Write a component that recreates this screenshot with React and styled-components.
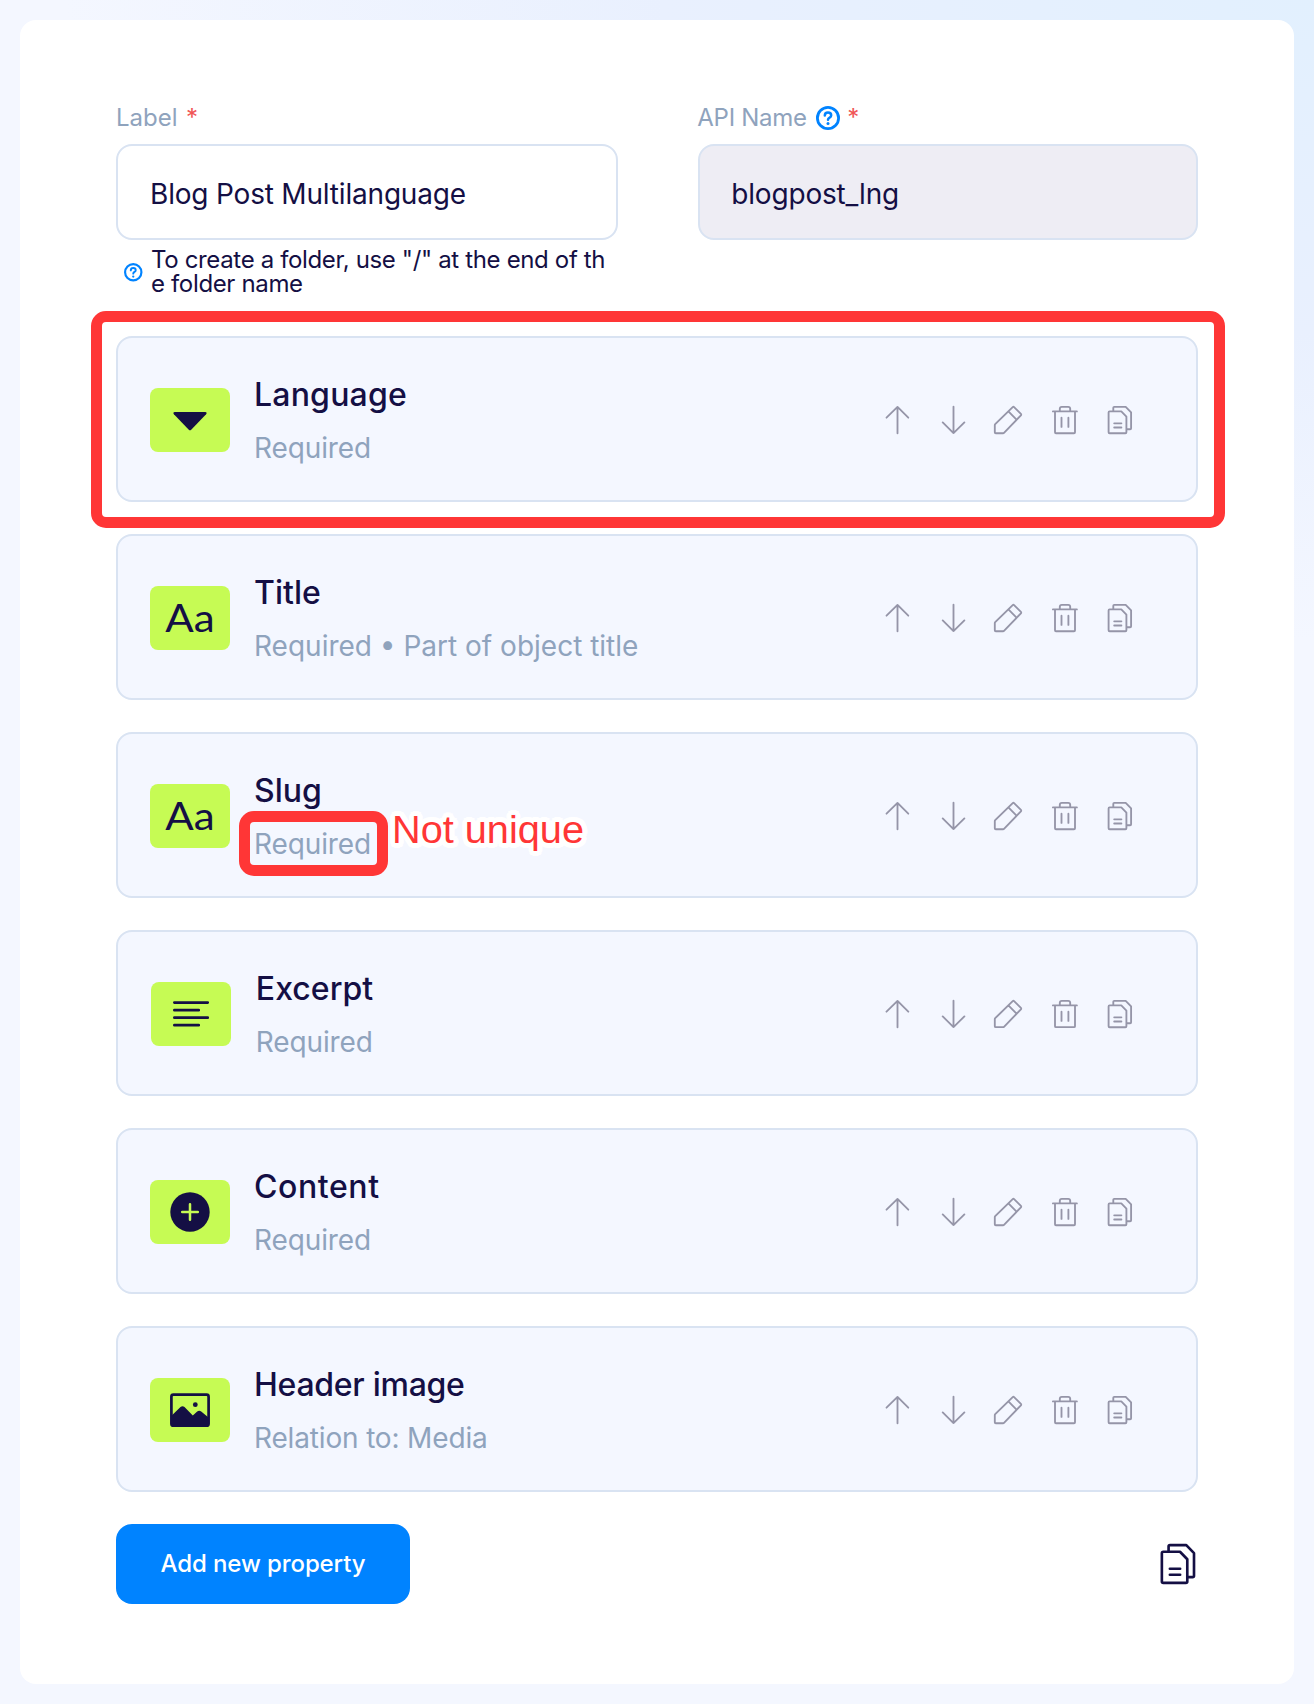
import React from 'react';
import styled, { createGlobalStyle } from 'styled-components';

const navy = '#140f44';
const red = '#ff3636';

const GlobalStyle = createGlobalStyle`
  * { box-sizing: border-box; }
  body {
    margin: 0;
    font-family: Inter, "Liberation Sans", sans-serif;
    color: ${navy};
    -webkit-font-smoothing: antialiased;
  }
`;

const Page = styled.div`
  min-height: 1704px;
  padding: 20px;
  background:
    radial-gradient(ellipse 1250px 640px at 100% 0, #e2f0fe 0%, #e9f0fe 52%, #f4f7ff 100%),
    #f4f7ff;
`;

const Card = styled.main`
  height: 1664px;
  padding: 82px 96px 0;
  border-radius: 16px;
  background: #fff;
`;

const Fields = styled.div`
  display: grid;
  grid-template-columns: 502px 500px;
  column-gap: 80px;
  height: 234px;
  align-items: start;
`;

const Field = styled.div`
  display: flex;
  flex-direction: column;
`;

const Label = styled.label`
  display: flex;
  align-items: center;
  height: 32px;
  margin: 0 0 10px ${(p) => p.$shift || 0}px;
  font-size: 24px;
  line-height: 32px;
  letter-spacing: ${(p) => p.$spacing || 0}px;
  color: #8fa3bd;
  svg { margin-left: 9.5px; }
`;

const Star = styled.span`
  margin-left: ${(p) => p.$gap}px;
  color: #f05656;
`;

const Input = styled.div`
  display: flex;
  align-items: center;
  height: 96px;
  padding: 3px 32px 0 ${(p) => (p.$disabled ? 31.3 : 32)}px;
  border: 2px solid #d9e3f2;
  border-radius: 16px;
  background: ${(p) => (p.$disabled ? '#eeedf4' : '#fff')};
  font-size: 28px;
  line-height: 36px;
  letter-spacing: -0.19px;
`;

const Hint = styled.div`
  display: flex;
  align-items: center;
  gap: 8.5px;
  padding: 8px 0 0 8px;
  font-size: 24px;
  line-height: 24px;
  letter-spacing: -0.35px;
`;

const HintText = styled.span`
  width: 460px;
  word-break: break-all;
`;

const List = styled.div`
  display: flex;
  flex-direction: column;
  gap: 32px;
`;

const Row = styled.section`
  position: relative;
  display: flex;
  align-items: center;
  height: 166px;
  padding: 2px 60px 0 32px;
  border: 2px solid #d9e3f2;
  border-radius: 16px;
  background: #f4f7ff;
`;

const Tile = styled.div`
  display: flex;
  align-items: center;
  justify-content: center;
  width: 80px;
  height: 64px;
  margin-left: ${(p) => p.$shift || 0}px;
  border-radius: 8px;
  background: #c6fb54;
`;

const Letters = styled.span`
  font-family: Lato, sans-serif;
  font-size: 39px;
  line-height: 62px;
  height: 64px;
  transform: scaleX(1.08);
`;

const Texts = styled.div`
  flex: 1;
  margin-left: ${(p) => 24 + (p.$shift ? 1.2 : 0)}px;
  padding-bottom: 1px;
`;

const Name = styled.div`
  font-size: 32px;
  font-weight: 500;
  line-height: 40px;
  letter-spacing: ${(p) => p.$spacing}px;
`;

const Meta = styled.div`
  margin-top: 16px;
  font-size: 28px;
  line-height: 35px;
  margin-bottom: -1px;
  letter-spacing: ${(p) => p.$spacing}px;
  color: #8fa3bd;
`;

const Actions = styled.div`
  display: flex;
  gap: 28px;
  color: #9595a8;
`;

const Footer = styled.footer`
  display: flex;
  align-items: center;
  justify-content: space-between;
  margin-top: 32px;
  padding-right: 3px;
`;

const AddButton = styled.button`
  width: 294px;
  height: 80px;
  border: 0;
  border-radius: 16px;
  background: #0083ff;
  color: #fff;
  font: 500 24px/32px Inter, sans-serif;
  letter-spacing: -0.1px;
`;

const Highlight = styled.div`
  position: absolute;
  left: ${(p) => p.$x}px;
  top: ${(p) => p.$y}px;
  width: ${(p) => p.$w}px;
  height: ${(p) => p.$h}px;
  border: 11px solid ${red};
  border-radius: 15px;
  pointer-events: none;
`;

const halo = Array.from({ length: 24 }, (_, i) => {
  const a = (i * Math.PI) / 12;
  return `${(5 * Math.cos(a)).toFixed(2)}px ${(5 * Math.sin(a)).toFixed(2)}px 0 #fff`;
}).join(', ');

const Note = styled.div`
  position: absolute;
  left: 274px;
  top: 72px;
  font-family: "Liberation Sans", Arial, sans-serif;
  font-size: 39.7px;
  line-height: 46px;
  white-space: nowrap;
  color: ${red};
  text-shadow: ${halo};
`;

const Stroke = styled.svg`
  display: block;
  flex: none;
  overflow: visible;
  fill: none;
  stroke: currentColor;
  stroke-width: 1.85;
  stroke-linecap: round;
  stroke-linejoin: round;
`;

const Glyph = styled.svg`
  display: block;
  fill: ${navy};
`;

const UpIcon = () => (
  <Stroke width="28" height="28" viewBox="0 0 28 28">
    <path d="M13.5 1v26.3M2.5 11.7 13.5.9l10.8 10.8" />
  </Stroke>
);
const DownIcon = () => (
  <Stroke width="28" height="28" viewBox="0 0 28 28">
    <path d="M13.5.7V27M2.7 16.4 13.5 27.1l10.9-10.7" />
  </Stroke>
);
const PencilIcon = () => (
  <Stroke width="28" height="28" viewBox="0 0 28 28">
    <path d="M-1.2 26.2v-7.1q0-.5.4-.9L16.7 1.1q.7-.6 1.4 0l6.8 6.8q.6.7 0 1.4L8 26.8q-.4.4-.9.4H-.2q-1 0-1-1ZM12.4 5.4l7.9 8" />
  </Stroke>
);
const TrashIcon = () => (
  <Stroke width="28" height="28" viewBox="0 0 28 28">
    <path d="M.9 5.4h24M3 5.4v20.8q0 1 1 1h18q1 0 1-1V5.4M7.8 5.2V2.8q0-2 2-2h6.4q2 0 2 2v2.4M9.5 11.7v9.2M16.4 11.7v9.2" />
  </Stroke>
);
const copyPath =
  'M1.6 5.4h11.7l5.1 5.3v15.5q0 1-1 1H1.6q-1 0-1-1V6.4q0-1 1-1ZM5.3 5.2V1.8q0-1 1-1h11.4l5.4 5.6v15.8q0 1-1 1H19M6.2 17.3h7.2M6.2 21.5h7.2';
const CopyIcon = ({ large }) => (
  <Stroke width={large ? 34.3 : 28} height={large ? 40 : 28} viewBox={large ? '0 0 24 28' : '0 0 28 28'}>
    <path d={copyPath} />
  </Stroke>
);

const HelpIcon = ({ size }) => (
  <Stroke width={size} height={size} viewBox="0 0 24 24" color="#0083ff">
    <circle cx="12" cy="12" r="10.6" strokeWidth="2.8" />
    <path d="M8.8 9.6q0-3.1 3.2-3.1t3.2 2.8q0 1.5-1.6 2.3T12 13.8" strokeWidth="2.5" />
    <circle cx="12" cy="17.6" r="1.5" fill="currentColor" stroke="none" />
  </Stroke>
);

const glyphs = {
  select: (
    <Glyph width="80" height="64" viewBox="0 0 80 64">
      <path d="M24.8 24h30.4q2.3.4.9 2.3L41.2 41.7q-1.2 1.2-2.4 0L23.9 26.3q-1.4-1.9.9-2.3Z" />
    </Glyph>
  ),
  text: <Letters>Aa</Letters>,
  paragraph: (
    <Glyph width="80" height="64" viewBox="0 0 80 64">
      <path
        d="M23.4 20.6h33.3M23.4 28.2h24.3M23.4 35.7h33.3M23.4 43.2h24.3"
        stroke={navy}
        strokeWidth="2.8"
        strokeLinecap="round"
      />
    </Glyph>
  ),
  plus: (
    <Glyph width="80" height="64" viewBox="0 0 80 64">
      <circle cx="40" cy="32" r="19.7" />
      <path d="M32.2 32h15.6M40 24.2v15.6" stroke="#c6fb54" strokeWidth="2.5" strokeLinecap="round" />
    </Glyph>
  ),
  image: (
    <Glyph width="80" height="64" viewBox="0 0 80 64">
      <rect x="21.4" y="16.7" width="37.2" height="31" rx="2" fill="none" stroke={navy} strokeWidth="2.7" />
      <path d="M22 37.2 30.5 29q2-1.6 4 0l8.3 8.6 4.4-4.2q2-1.5 4 0l7.3 6V48H22Z" />
      <circle cx="45.3" cy="26.7" r="2.4" />
    </Glyph>
  ),
};

const properties = [
  {
    name: 'Language',
    meta: 'Required',
    icon: 'select',
    tracking: [0.2, -0.12],
    box: { $x: -27, $y: -27, $w: 1134, $h: 217 },
  },
  { name: 'Title', meta: 'Required • Part of object title', icon: 'text', tracking: [0, 0] },
  {
    name: 'Slug',
    meta: 'Required',
    icon: 'text',
    tracking: [0, -0.12],
    box: { $x: 121, $y: 77, $w: 149, $h: 65 },
    note: 'Not unique',
  },
  { name: 'Excerpt', meta: 'Required', icon: 'paragraph', tracking: [0.05, -0.12], shift: 0.6 },
  { name: 'Content', meta: 'Required', icon: 'plus', tracking: [0.58, -0.12] },
  { name: 'Header image', meta: 'Relation to: Media', icon: 'image', tracking: [-0.27, -0.16] },
];

export default function App() {
  return (
    <Page>
      <GlobalStyle />
      <Card>
        <Fields>
          <Field>
            <Label>
              Label<Star $gap={8.5}>*</Star>
            </Label>
            <Input>Blog Post Multilanguage</Input>
            <Hint>
              <HelpIcon size={18.5} />
              <HintText>To create a folder, use "/" at the end of the folder name</HintText>
            </Hint>
          </Field>
          <Field>
            <Label $spacing={-0.28} $shift={-0.7}>
              API Name
              <HelpIcon size={24} />
              <Star $gap={7}>*</Star>
            </Label>
            <Input $disabled>blogpost_lng</Input>
          </Field>
        </Fields>
        <List>
          {properties.map((p) => (
            <Row key={p.name}>
              <Tile $shift={p.shift}>{glyphs[p.icon]}</Tile>
              <Texts $shift={p.shift}>
                <Name $spacing={p.tracking[0]}>{p.name}</Name>
                <Meta $spacing={p.tracking[1]}>{p.meta}</Meta>
              </Texts>
              <Actions>
                <UpIcon />
                <DownIcon />
                <PencilIcon />
                <TrashIcon />
                <CopyIcon />
              </Actions>
              {p.box && <Highlight {...p.box} />}
              {p.note && <Note>{p.note}</Note>}
            </Row>
          ))}
        </List>
        <Footer>
          <AddButton>Add new property</AddButton>
          <CopyIcon large />
        </Footer>
      </Card>
    </Page>
  );
}
